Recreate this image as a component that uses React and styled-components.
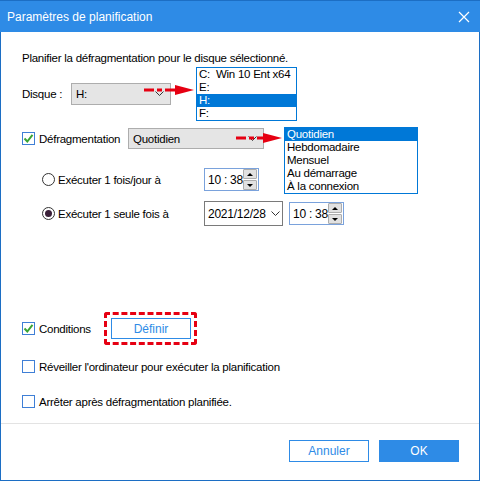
import React from "react";
import styled, { createGlobalStyle } from "styled-components";

const GlobalStyle = createGlobalStyle`
  html, body {
    margin: 0;
    padding: 0;
    background: #ffffff;
  }
  body {
    font-family: "Liberation Sans", Arial, sans-serif;
    font-size: 11.5px;
    letter-spacing: -0.25px;
    color: #000;
  }
`;

const Window = styled.div`
  position: relative;
  width: 480px;
  height: 481px;
  box-sizing: border-box;
  border: 1px solid #1c6ec4;
  border-top: none;
  display: flex;
  flex-direction: column;
  background: #fff;
`;

const TitleBar = styled.div`
  height: 32px;
  background: #2e8be6;
  display: flex;
  align-items: center;
  justify-content: space-between;
  padding: 0 9px 0 7px;
  margin: 0 -1px;
  border-top: 1px solid #1c6ec4;
  box-sizing: border-box;
  color: #fff;
  font-size: 12px;
  letter-spacing: 0;
`;

const CloseBtn = styled.svg`
  width: 14px;
  height: 14px;
`;

const Body = styled.div`
  position: relative;
  flex: 1;
  padding: 19px 0 0 21px;
`;

const Line = styled.div`
  height: ${(p) => p.h}px;
  margin-top: ${(p) => p.mt || 0}px;
  display: flex;
  align-items: center;
  padding-left: ${(p) => p.indent || 0}px;
  white-space: nowrap;
`;

const Label = styled.span`
  width: ${(p) => (p.w ? `${p.w}px` : "auto")};
  flex-shrink: 0;
`;

const Combo = styled.div`
  width: ${(p) => p.w}px;
  height: ${(p) => p.h}px;
  box-sizing: border-box;
  background: #e5e5e5;
  border: 1px solid #adadad;
  display: flex;
  align-items: center;
  justify-content: space-between;
  padding: 0 6px 0 4px;
`;

const Chevron = styled.svg`
  width: 9px;
  height: 6px;
`;

const CheckBox = styled.span`
  width: 13px;
  height: 13px;
  box-sizing: border-box;
  border: 1px solid #3f7fd6;
  background: #fff;
  margin-right: 4px;
  display: inline-flex;
  align-items: center;
  justify-content: center;
  flex-shrink: 0;
`;

const Radio = styled.span`
  width: 13px;
  height: 13px;
  box-sizing: border-box;
  border: 1px solid #333;
  border-radius: 50%;
  margin-right: 3px;
  display: inline-flex;
  align-items: center;
  justify-content: center;
  flex-shrink: 0;
  &::after {
    content: "";
    width: 7px;
    height: 7px;
    border-radius: 50%;
    background: ${(p) => (p.checked ? "#3a1f38" : "transparent")};
  }
`;

const Field = styled.div`
  width: ${(p) => p.w}px;
  height: ${(p) => p.h}px;
  box-sizing: border-box;
  border: 1px solid ${(p) => (p.gray ? "#7a7a7a" : "#7aa2dc")};
  background: #fff;
  display: flex;
  align-items: center;
  justify-content: space-between;
  padding: 0 2px 0 3px;
  margin-left: ${(p) => p.ml || 0}px;
  flex-shrink: 0;
  font-size: 12px;
`;

const Spinner = styled.div`
  display: flex;
  flex-direction: column;
  gap: 1px;
`;

const SpinBtn = styled.div`
  width: 12px;
  height: 8px;
  background: #e1e1e1;
  border: 1px solid #adadad;
  border-radius: 1px;
  display: flex;
  align-items: center;
  justify-content: center;
`;

const Tri = styled.span`
  width: 0;
  height: 0;
  border-left: 3px solid transparent;
  border-right: 3px solid transparent;
  ${(p) =>
    p.down ? "border-top: 3px solid #000;" : "border-bottom: 3px solid #000;"}
`;

const DefineButton = styled.button`
  width: 80px;
  height: 21px;
  box-sizing: border-box;
  border: 1px solid #2e8be6;
  background: #fff;
  color: #2e8be6;
  font-family: inherit;
  font-size: 12px;
  padding: 0;
  display: block;
`;

const DashedFrame = styled.div`
  padding: 3px 3px 3px 4px;
  border: 3px dashed #e60012;
  border-radius: 3px;
`;

const ListBox = styled.ul`
  position: absolute;
  left: ${(p) => p.x}px;
  top: ${(p) => p.y}px;
  width: ${(p) => p.w}px;
  margin: 0;
  padding: 0;
  list-style: none;
  border: 1px solid #0078d7;
  background: #fff;
  font-size: 11.5px;
  box-sizing: border-box;
`;

const ListItem = styled.li`
  height: 13px;
  line-height: 13px;
  padding-left: 2px;
  background: ${(p) => (p.active ? "#0078d7" : "transparent")};
  color: ${(p) => (p.active ? "#fff" : "#000")};
  white-space: pre;
`;

const Arrow = styled.svg`
  position: absolute;
  left: ${(p) => p.x}px;
  top: ${(p) => p.y}px;
`;

const Footer = styled.div`
  height: 57px;
  border-top: 1px solid #e3e3e3;
  display: flex;
  justify-content: flex-end;
  align-items: flex-start;
  gap: 10px;
  padding: 16px 20px 0 0;
  box-sizing: border-box;
`;

const FooterBtn = styled.button`
  width: 80px;
  height: 22px;
  box-sizing: border-box;
  font-family: inherit;
  font-size: 12px;
  border: 1px solid #2e8be6;
  background: ${(p) => (p.primary ? "#2e8be6" : "#fff")};
  color: ${(p) => (p.primary ? "#fff" : "#2e8be6")};
  padding: 0;
`;

const Check = () => (
  <svg width="11" height="11" viewBox="0 0 11 11">
    <path d="M1.5 5.5 L4.3 8.5 L9.5 1.8" stroke="#3aa435" strokeWidth="2" fill="none" />
  </svg>
);

const Down = () => (
  <Chevron viewBox="0 0 9 6">
    <path d="M0.5 0.5 L4.5 4.5 L8.5 0.5" stroke="#333" fill="none" />
  </Chevron>
);

const RedArrow = ({ x, y, len }) => (
  <Arrow x={x} y={y} width={len} height="12" viewBox={`0 0 ${len} 12`}>
    <line
      x1="0"
      y1="6"
      x2={len - 18}
      y2="6"
      stroke="#e60012"
      strokeWidth="3"
      strokeDasharray="10 3 5 3"
    />
    <polygon points={`${len - 19},1 ${len},6 ${len - 19},11`} fill="#e60012" />
  </Arrow>
);

const TimeSpin = ({ ml }) => (
  <Field w={55} h={23} ml={ml}>
    <span>10 : 38</span>
    <Spinner>
      <SpinBtn>
        <Tri />
      </SpinBtn>
      <SpinBtn>
        <Tri down />
      </SpinBtn>
    </Spinner>
  </Field>
);

export default function App() {
  return (
    <>
      <GlobalStyle />
      <Window>
        <TitleBar>
          <span>Paramètres de planification</span>
          <CloseBtn viewBox="0 0 14 14">
            <path d="M2 2 L12 12 M12 2 L2 12" stroke="#fff" strokeWidth="1.2" />
          </CloseBtn>
        </TitleBar>

        <Body>
          <Line h={14} mt={0}>
            Planifier la défragmentation pour le disque sélectionné.
          </Line>

          <Line h={22} mt={18}>
            <Label w={49}>Disque :</Label>
            <Combo w={100} h={22}>
              <span>H:</span>
              <Down />
            </Combo>
          </Line>

          <Line h={21} mt={23}>
            <CheckBox>
              <Check />
            </CheckBox>
            <Label w={89}>Défragmentation</Label>
            <Combo w={136} h={21}>
              <span>Quotidien</span>
              <Down />
            </Combo>
          </Line>

          <Line h={23} mt={19} indent={20}>
            <Radio />
            <Label w={146}>Exécuter 1 fois/jour à</Label>
            <TimeSpin />
          </Line>

          <Line h={25} mt={10} indent={20}>
            <Radio checked />
            <Label w={146}>Exécuter 1 seule fois à</Label>
            <Field w={79} h={25} gray>
              <span>2021/12/28</span>
              <Down />
            </Field>
            <TimeSpin ml={6} />
          </Line>

          <Line h={33} mt={86}>
            <CheckBox>
              <Check />
            </CheckBox>
            <Label w={65}>Conditions</Label>
            <DashedFrame>
              <DefineButton>Définir</DefineButton>
            </DashedFrame>
          </Line>

          <Line h={13} mt={15}>
            <CheckBox />
            <Label>Réveiller l'ordinateur pour exécuter la planification</Label>
          </Line>

          <Line h={13} mt={22}>
            <CheckBox />
            <Label>Arrêter après défragmentation planifiée.</Label>
          </Line>

          <ListBox x={195} y={35} w={101}>
            <ListItem>C:  Win 10 Ent x64</ListItem>
            <ListItem>E:</ListItem>
            <ListItem active>H:</ListItem>
            <ListItem>F:</ListItem>
          </ListBox>
          <RedArrow x={143} y={52} len={50} />

          <ListBox x={283} y={95} w={134}>
            <ListItem active>Quotidien</ListItem>
            <ListItem>Hebdomadaire</ListItem>
            <ListItem>Mensuel</ListItem>
            <ListItem>Au démarrage</ListItem>
            <ListItem>À la connexion</ListItem>
          </ListBox>
          <RedArrow x={235} y={100} len={46} />
        </Body>

        <Footer>
          <FooterBtn>Annuler</FooterBtn>
          <FooterBtn primary>OK</FooterBtn>
        </Footer>
      </Window>
    </>
  );
}
